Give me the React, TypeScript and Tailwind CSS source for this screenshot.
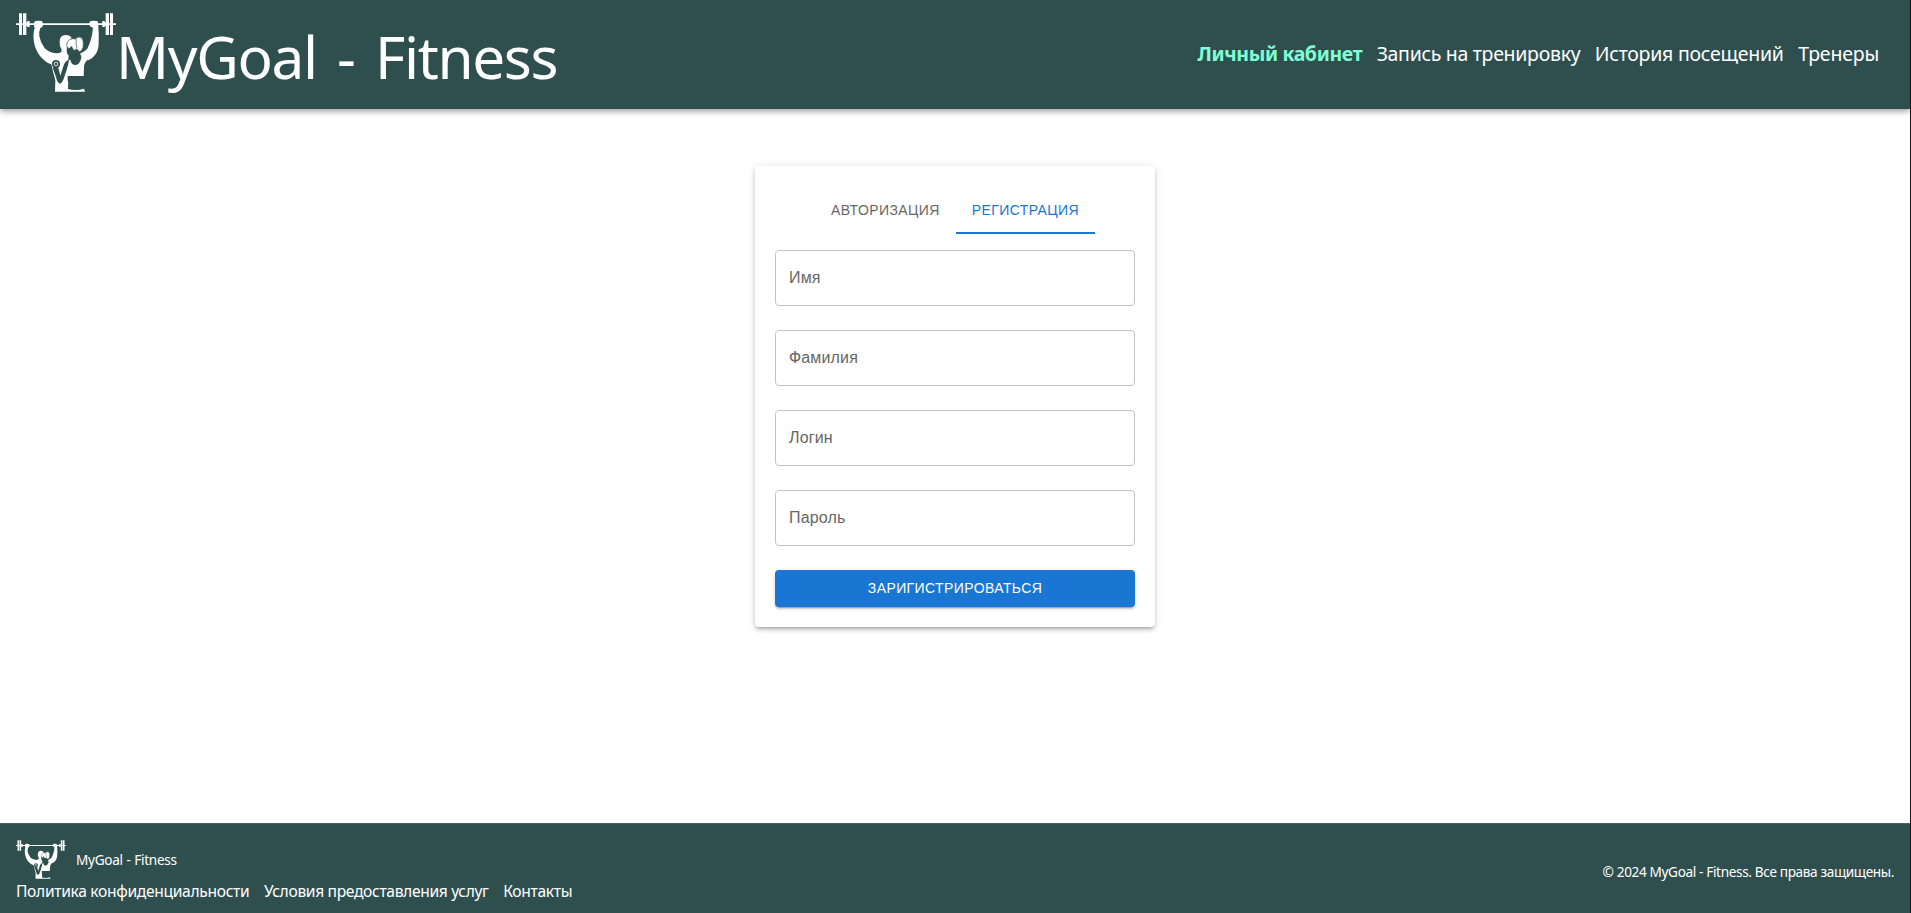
const PAGE_FONT = "font-['Noto_Sans','Open_Sans',sans-serif]";

function Logo({ className }: { className: string }) {
  return (
    <svg viewBox="48 38 300 237" className={className} preserveAspectRatio="none" fill="#fff" aria-hidden="true">
      {/* barbell */}
      <path d="M48 69H348V74H48Z" />
      <path d="M57 39H66V104H57ZM69 39H79V104H69ZM317 39H327V104H317ZM330 39H339V104H330Z" />
      <path d="M79 66L84 62H89V80H84L79 77ZM317 66L312 62H307V80H312L317 77Z" />
      {/* man: raised arm, shoulder, head and torso */}
      <path d="M102 68Q103 61 112 61L125 62Q130 66 129 75Q128 81 121 83Q116 94 118 108Q121 126 134 144Q147 156 163 158Q176 161 185 154L184 145Q178 137 179 124Q179 105 197 104Q211 104 215 114L204 126L202 148L210 160L212 180L204 262V274H165L166 240Q158 212 154 192Q138 188 120 167Q106 149 102 126Q98 102 104 83Q101 76 102 68Z" />
      {/* raised arm on the right */}
      <path d="M268 68Q269 61 279 61L291 62Q297 66 295 80Q297 98 296 122Q297 145 288 160Q278 174 265 180L247 173L240 160Q255 153 262 145Q272 125 276 105L279 82Q267 80 268 68Z" />
      {/* face, neck and folded arm */}
      <path d="M201 138Q210 140 214 134L218 144Q226 146 230 142L238 150L239 172L248 179L240 194L222 196L208 184L204 198L194 226Q188 248 180 250Q172 248 168 230L158 202Q162 198 174 199L181 226L192 192Q197 181 205 178L206 166Q199 160 200 150Z" fill="#2f4f4f" />
      {/* ponytail hair */}
      <path d="M202 143Q197 125 209 118Q217 113 227 116Q231 109 240 110Q250 113 250 128Q251 145 243 152Q238 156 234 150L230 146Q225 152 219 148L215 138Q210 146 202 143Z" stroke="#2f4f4f" strokeWidth="2" />
      <path d="M229 117Q226 128 231 144" fill="none" stroke="#2f4f4f" strokeWidth="2" />
      {/* sports top */}
      <path d="M207 179L211 178Q213 193 226 194Q241 193 245 166L256 170L262 179Q251 190 252 203L251 227H202L201 214Q200 203 204 196Z" />
      {/* waist and waistband */}
      <path d="M203 227H250L249 240Q249 256 254 269L205 265Q207 248 203 240Z" fill="#2f4f4f" />
      <path d="M204 266Q229 272 252 265L255 274H203Z" />
      {/* dumbbell held in front */}
      <circle cx="168" cy="191" r="12" fill="#2f4f4f" />
      <circle cx="168" cy="191" r="5.5" fill="none" stroke="#fff" strokeWidth="2.5" />
    </svg>
  );
}

const fields = ["Имя", "Фамилия", "Логин", "Пароль"];

export default function App() {
  return (
    <div className={`flex h-screen flex-col border-r border-[#15171e] bg-white text-white ${PAGE_FONT}`}>
      <header className="flex h-[109px] shrink-0 items-start justify-between bg-[#2f4f4f] pl-4 pr-[31px] shadow-[0_2px_4px_-1px_rgba(0,0,0,0.2),0_4px_5px_0_rgba(0,0,0,0.14),0_1px_10px_0_rgba(0,0,0,0.12)]">
        <div className="flex">
          <Logo className="mt-[13px] h-[79px] w-[100px]" />
          <h1 className="mt-4 whitespace-nowrap text-[58.5px] leading-[80px] tracking-[-1.35px] [word-spacing:6.5px]">MyGoal - Fitness</h1>
        </div>
        <nav className="mt-[39px] flex gap-[14.5px] whitespace-nowrap text-[19.5px] leading-[30px]">
          <a className="font-bold tracking-[-0.38px] text-[#7fffd4]">Личный кабинет</a>
          <a className="tracking-[-0.3px]">Запись на тренировку</a>
          <a className="tracking-[-0.25px]">История посещений</a>
          <a className="tracking-[-0.2px]">Тренеры</a>
        </nav>
      </header>

      <main className="flex flex-1 items-start justify-center pt-[57px] font-['Liberation_Sans',Arial,sans-serif]">
        <form className="flex w-[400px] flex-col rounded bg-white p-5 shadow-[0_3px_3px_-2px_rgba(0,0,0,0.2),0_3px_4px_0_rgba(0,0,0,0.14),0_1px_8px_0_rgba(0,0,0,0.12)]">
          <div className="flex h-12 justify-center text-sm tracking-[0.4px]">
            <button type="button" className="px-4 pb-px text-[#666]">АВТОРИЗАЦИЯ</button>
            <button type="button" className="border-b-2 border-[#1976d2] px-4 pt-px text-[#1976d2]">РЕГИСТРАЦИЯ</button>
          </div>
          <div className="mt-4 flex flex-col gap-6">
            {fields.map((label) => (
              <label key={label} className="flex h-14 items-center rounded border border-[#c4c4c4] px-[13px] pb-px text-base tracking-[0.15px] text-[#666]">
                {label}
              </label>
            ))}
            <button type="button" className="h-[37px] rounded bg-[#1976d2] pb-[2px] text-sm font-medium tracking-[0.4px] shadow-[0_3px_1px_-2px_rgba(0,0,0,0.2),0_2px_2px_0_rgba(0,0,0,0.14),0_1px_5px_0_rgba(0,0,0,0.12)]">
              ЗАРИГИСТРИРОВАТЬСЯ
            </button>
          </div>
        </form>
      </main>

      <footer className="flex h-[90px] shrink-0 items-start justify-between whitespace-nowrap border-t border-[#466262] bg-[#2f4f4f] px-4">
        <div className="flex flex-col">
          <div className="mt-4 flex h-[39px]">
            <Logo className="h-[39px] w-[50px]" />
            <span className="ml-[10px] mt-[10px] text-[13.6px] leading-5 tracking-[-0.3px] [word-spacing:0.5px]">MyGoal - Fitness</span>
          </div>
          <div className="flex gap-[14.5px] text-[15.6px] leading-6">
            <a className="tracking-[-0.31px]">Политика конфиденциальности</a>
            <a className="tracking-[-0.33px]">Условия предоставления услуг</a>
            <a className="tracking-[-0.3px]">Контакты</a>
          </div>
        </div>
        <p className="mt-[38px] text-[13.6px] leading-5 tracking-[-0.36px]">© 2024 MyGoal - Fitness. Все права защищены.</p>
      </footer>
    </div>
  );
}
